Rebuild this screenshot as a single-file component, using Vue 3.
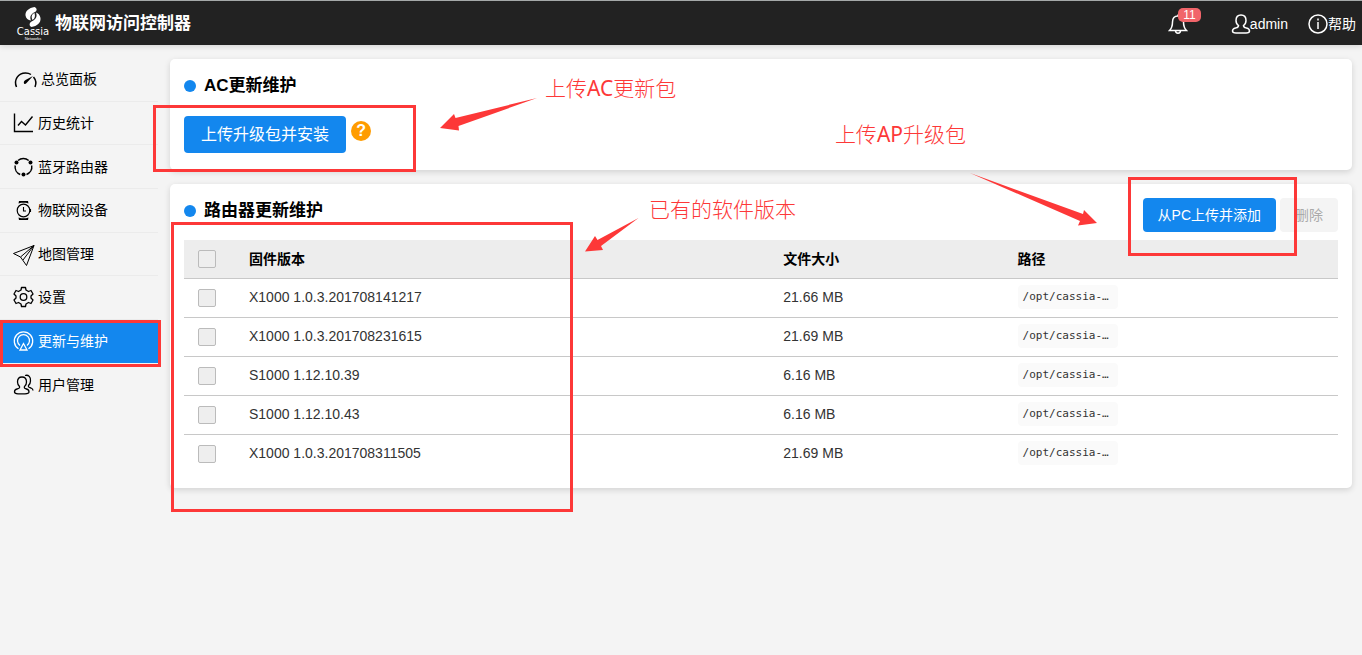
<script setup>
import { ref } from 'vue'

const nav = [
  { id: 'gauge', label: '总览面板' },
  { id: 'chart', label: '历史统计' },
  { id: 'ring', label: '蓝牙路由器' },
  { id: 'watch', label: '物联网设备' },
  { id: 'plane', label: '地图管理' },
  { id: 'gear', label: '设置' },
  { id: 'update', label: '更新与维护', active: true },
  { id: 'users', label: '用户管理' },
]

const rows = ref([
  { version: 'X1000 1.0.3.201708141217', size: '21.66 MB', checked: false },
  { version: 'X1000 1.0.3.201708231615', size: '21.69 MB', checked: false },
  { version: 'S1000 1.12.10.39', size: '6.16 MB', checked: false },
  { version: 'S1000 1.12.10.43', size: '6.16 MB', checked: false },
  { version: 'X1000 1.0.3.201708311505', size: '21.69 MB', checked: false },
])
</script>

<template>
  <div class="page">
    <header class="topbar">
      <a class="brand" href="#">
        <span class="logo">
          <svg class="swirl" viewBox="0 0 16 20" aria-hidden="true">
            <path d="M9.500 0C4 1 0 4 0.500 8.500C1 11.500 3 13 6 13.500C4.500 10 5.500 7 10 5C12.500 3.500 12 1 9.500 0Z" fill="#fff" />
            <path d="M6.500 20C12 19 16 16 15.500 11C15 8 13 6 11 5.500C12.500 9.500 11 12.500 6.500 14.500C4 16 4 19 6.500 20Z" fill="#fff" />
            <path d="M9.500 6C6.500 7.500 6 10 7.500 13C10 11.500 10.500 9 9.500 6Z" fill="#fff" />
          </svg>
          <span class="logo-name">Cassia</span>
          <span class="logo-sub">Networks</span>
        </span>
        <span class="app-name">物联网访问控制器</span>
      </a>
      <div class="tools">
        <button class="tool bell" type="button" aria-label="11">
          <svg width="20" height="20" viewBox="0 0 20 20" fill="none" stroke="#fff" stroke-width="1.500">
            <path d="M10 2C6.500 2 4.500 4.500 4.500 8C4.500 12.500 4 14 1.500 16.500H18.500C16 14 15.500 12.500 15.500 8C15.500 4.500 13.500 2 10 2ZM10 2V0.500M7.500 16.500C7.500 20 12.500 20 12.500 16.500" />
          </svg>
          <span class="badge">11</span>
        </button>
        <a class="tool user" href="#">
          <svg width="20" height="20" viewBox="0 0 20 20" fill="none" stroke="#fff" stroke-width="1.500">
            <path d="M10 1C6.500 1 5 3.500 5 6.500C5 9 6 10.500 7.500 11.500C7.500 13.500 6.500 13.500 4.500 14C2.500 14.500 1.500 15.500 1.500 17C1.500 18.500 3 19 5 19H15C17 19 18.500 18.500 18.500 17C18.500 15.500 17.500 14.500 15.500 14C13.500 13.500 12.500 13.500 12.500 11.500C14 10.500 15 9 15 6.500C15 3.500 13.500 1 10 1Z" />
          </svg>
          <span>admin</span>
        </a>
        <a class="tool" href="#">
          <svg width="20" height="20" viewBox="0 0 20 20" fill="none" stroke="#fff" stroke-width="1.500">
            <circle cx="10" cy="10" r="9" />
            <path d="M10 8V15M10 4.500V6.500" />
          </svg>
          <span>帮助</span>
        </a>
      </div>
    </header>

    <div class="body">
      <nav class="sidebar">
        <a v-for="n in nav" :key="n.id" href="#" class="nav-item" :class="{ active: n.active, wide: n.id === 'gauge' }">
          <svg v-if="n.id === 'gauge'" class="icon" viewBox="0 0 24 22">
            <path d="M3.500 19C0.500 12 5 5 12.500 5C14.500 5 16.500 5.500 18 6.500M20.500 9C23 12 23.500 15.500 22 19" stroke-width="1.500" />
            <path d="M11 15.500C10.500 14 11 13 12.500 12L20 8L14 14.500C13 16 12 16.500 11 15.500Z" fill="currentColor" stroke="none" />
          </svg>
          <svg v-else-if="n.id === 'chart'" class="icon" viewBox="0 0 22 22">
            <path d="M1.500 1.500V19.500H20M5 13.500L8.500 9.500L12.500 13L19.500 4.500" stroke-width="1.400" />
          </svg>
          <svg v-else-if="n.id === 'ring'" class="icon" viewBox="0 0 22 22">
            <path d="M5 4.500A8.200 8.200 0 0 1 15.700 4.500M18.700 9.500A8.200 8.200 0 0 1 13.500 18.500M7.200 18.500A8.200 8.200 0 0 1 2.200 9.500" stroke-width="1.500" />
            <g fill="currentColor" stroke="none">
              <circle cx="3.500" cy="6.500" r="2" /><circle cx="17.500" cy="6.500" r="2" /><circle cx="10.500" cy="18.500" r="2" />
            </g>
          </svg>
          <svg v-else-if="n.id === 'watch'" class="icon" viewBox="0 0 22 22">
            <circle cx="10.500" cy="11.500" r="6.300" stroke-width="1.200" />
            <path d="M10.500 8V12H13M17.500 10V13" stroke-width="1.100" />
            <path d="M5.500 4.500L6 2H15L15.500 4.500L13 3.800H8ZM5.500 18.500L6 21H15L15.500 18.500L13 19.200H8Z" fill="currentColor" stroke="none" />
          </svg>
          <svg v-else-if="n.id === 'plane'" class="icon" viewBox="0 0 22 22">
            <path d="M21 2.500L0.500 10.500L7.500 14L13.500 22.500ZM21 2.500L7.500 14M21 2.500L10 17" stroke-width="1" />
          </svg>
          <svg v-else-if="n.id === 'gear'" class="icon" viewBox="0 0 22 22">
            <path d="M8.500 1.500H12.500L13 4L15.500 5.500L18 4.500L20 8L18 10V12L20 14L18 17.500L15.500 16.500L13 18L12.500 20.500H8.500L8 18L5.500 16.500L3 17.500L1 14L3 12V10L1 8L3 4.500L5.500 5.500L8 4Z" stroke-width="1.300" stroke-linejoin="round" />
            <circle cx="10.500" cy="11" r="3.300" stroke-width="1.300" />
          </svg>
          <svg v-else-if="n.id === 'update'" class="icon" viewBox="0 0 22 22">
            <path d="M5.500 18.800A9.200 9.200 0 1 1 15.500 18.800M7 15.500A6 6 0 1 1 14 15.500M10.500 13.500L7 20H14Z" stroke-width="1.300" />
          </svg>
          <svg v-else class="icon" viewBox="0 0 22 22">
            <path d="M9 3C6 3 4.500 5 4.500 8C4.500 10 5.500 11.500 6.500 12.500C7 14 6 14.500 4 15C2 15.500 1.500 16.500 1.500 18C1.500 19.500 3 19.800 5 19.800H12C14.500 19.800 16 19.500 16 18C16 16.500 15.500 15.500 13.500 15C11.500 14.500 11 14 11.500 12.500C13 11.500 13.500 10 13.500 8C13.500 5 12 3 9 3ZM12 1.500C15.500 0.500 18 3 17.500 7C17.500 9 16.500 10.500 15.500 11.500C15 13 16 13.500 18 14C19.500 14.500 20 15 20 16.500" stroke-width="1.300" />
          </svg>
          <span>{{ n.label }}</span>
          <i v-if="n.active" class="mark mark-nav"></i>
        </a>
      </nav>

      <main class="content">
        <section class="card">
          <h2>AC更新维护</h2>
          <div class="upload">
            <button class="btn large" type="button">上传升级包并安装</button>
            <button class="help" type="button">?</button>
          </div>
        </section>

        <section class="card">
          <div class="card-head">
            <h2>路由器更新维护</h2>
            <div class="actions">
              <button class="btn" type="button">从PC上传并添加</button>
              <button class="btn disabled" type="button" disabled>删除</button>
            </div>
          </div>
          <table>
            <colgroup><col class="c1" /><col class="c2" /><col class="c3" /><col /></colgroup>
            <thead>
              <tr>
                <th><input type="checkbox" aria-label="固件版本" /></th>
                <th>固件版本</th>
                <th>文件大小</th>
                <th>路径</th>
              </tr>
            </thead>
            <tbody>
              <tr v-for="r in rows" :key="r.version">
                <td><input v-model="r.checked" type="checkbox" :aria-label="r.version" /></td>
                <td>{{ r.version }}</td>
                <td>{{ r.size }}</td>
                <td><code>/opt/cassia-…</code></td>
              </tr>
            </tbody>
          </table>
        </section>
      </main>
    </div>

    <i class="mark mark-upload"></i>
    <i class="mark mark-table"></i>
    <i class="mark mark-add"></i>
    <span class="note note-ac">上传<b>AC</b>更新包</span>
    <span class="note note-ap">上传<b>AP</b>升级包</span>
    <span class="note note-list">已有的软件版本</span>
    <svg class="arrow arrow-ac" width="97" height="34" viewBox="0 0 97 34"><path d="M0 30L14 16L15.500 20L97 0L18.500 28L19 32.500Z" /></svg>
    <svg class="arrow arrow-ap" width="127" height="54" viewBox="0 0 127 54"><path d="M0 0L113 41L114 37L127 50L108 52.500L110 48Z" /></svg>
    <svg class="arrow arrow-list" width="54" height="34" viewBox="0 0 54 34"><path d="M53.500 0L12.500 22L10 18L0 33.500L18 32L16 28Z" /></svg>
  </div>
</template>

<style>
body {
  background: #f4f4f4;
}
</style>

<style scoped>
.page {
  position: relative;
  min-height: 100vh;
  font-family: "Liberation Sans", "Noto Sans CJK SC", sans-serif;
  font-size: 14px;
  line-height: 20px;
  color: #000;
}
.page * {
  box-sizing: border-box;
}
a {
  color: inherit;
  text-decoration: none;
}
button {
  font: inherit;
  border: 0;
  cursor: pointer;
}
.topbar {
  display: flex;
  justify-content: space-between;
  height: 45px;
  padding: 1px 6px 0 16px;
  border-top: 1px solid #a5a9a9;
  background: #222;
  color: #fff;
  box-shadow: 0 1px 6px rgba(0, 0, 0, 0.15);
}
.brand {
  display: flex;
  align-items: center;
  gap: 5px;
}
.logo {
  display: flex;
  flex-direction: column;
  align-items: center;
  width: 34px;
}
.swirl {
  width: 16px;
  height: 20px;
}
.logo-name {
  font-family: "DejaVu Sans", sans-serif;
  font-size: 10px;
  line-height: 10px;
}
.logo-sub {
  font-size: 4px;
  line-height: 4px;
}
.app-name {
  font-size: 17px;
  font-weight: 700;
}
.tools {
  display: flex;
  align-items: center;
}
.tool {
  display: flex;
  align-items: center;
}
.user svg {
  margin-right: -1px;
}
.bell {
  position: relative;
  padding: 0;
  margin-right: 43px;
  background: none;
  color: #fff;
}
.badge {
  position: absolute;
  left: 10px;
  top: -6px;
  width: 23px;
  border-radius: 5px;
  background: #f1656a;
  font-size: 12px;
  line-height: 14px;
}
.user {
  margin-right: 20px;
}
.body {
  display: flex;
}
.sidebar {
  flex: none;
  display: grid;
  grid-template-rows: repeat(8, 1fr);
  width: 158px;
  height: 349px;
  margin-top: 13px;
}
.nav-item {
  position: relative;
  display: flex;
  align-items: center;
  gap: 3px;
  padding-left: 13px;
  border-bottom: 1px solid #ebebeb;
}
.nav-item:last-child {
  border-bottom: 0;
}
.nav-item.wide {
  gap: 4px;
}
.nav-item.active {
  border-color: #1387ee;
  background: #1387ee;
  color: #fff;
}
.icon {
  width: 22px;
  height: 22px;
  fill: none;
  stroke: currentColor;
  overflow: visible;
}
.wide .icon {
  width: 24px;
}
.content {
  flex: 1;
  display: flex;
  flex-direction: column;
  gap: 14px;
  min-width: 0;
  padding: 14px 10px 20px 12px;
}
.card {
  padding: 14px;
  border-radius: 5px;
  background: #fff;
  box-shadow: 0 2px 6px rgba(0, 0, 0, 0.14);
}
h2 {
  display: flex;
  align-items: center;
  gap: 8px;
  margin: 0;
  font-size: 17px;
  line-height: 26px;
}
h2::before {
  content: "";
  width: 12px;
  height: 12px;
  border-radius: 50%;
  background: #1387ee;
}
.upload {
  display: flex;
  gap: 5px;
  padding: 3px 0;
  margin-top: 14px;
}
.btn {
  padding: 0 15px;
  border-radius: 4px;
  background: #1387ee;
  color: #fff;
  line-height: 34px;
}
.btn.large {
  padding: 0 17px;
  font-size: 16px;
  line-height: 37px;
}
.btn.disabled {
  background: #f4f4f4;
  color: #aaa;
}
.help {
  width: 20px;
  height: 20px;
  padding: 0;
  margin-top: 5px;
  border-radius: 50%;
  background: #ff9c00;
  color: #fff;
  font-size: 16px;
  font-weight: 700;
}
.card-head {
  display: flex;
  justify-content: space-between;
  align-items: flex-start;
  margin-bottom: 8px;
}
.actions {
  display: flex;
  gap: 4px;
}
table {
  width: 100%;
  table-layout: fixed;
  border-collapse: separate;
  border-spacing: 0;
  text-align: left;
}
.c1 { width: 65px; }
.c2 { width: 46.3%; }
.c3 { width: 20.3%; }
th,
td {
  height: 39px;
  padding: 0;
  border-bottom: 1px solid #c8c8c8;
}
th {
  background: #ededed;
}
td {
  padding-bottom: 2px;
  color: #333;
}
td:first-child {
  padding-bottom: 0;
}
tbody tr:last-child td {
  border-bottom-color: transparent;
}
input {
  appearance: none;
  display: block;
  width: 18px;
  height: 18px;
  margin: 0 14px;
  border: 1px solid #bbb;
  border-radius: 2px;
  background: #eee;
}
code {
  display: block;
  width: 100px;
  padding: 0 5px;
  border-radius: 4px;
  background: #fafafa;
  font-family: "DejaVu Sans Mono", monospace;
  font-size: 11px;
  line-height: 24px;
}
.mark {
  position: absolute;
  border: 3px solid #fd3838;
  pointer-events: none;
}
.mark-nav {
  left: 0;
  top: 0;
  width: 161px;
  height: 47px;
  z-index: 1;
}
.mark-upload {
  left: 153px;
  top: 105px;
  width: 263px;
  height: 67px;
}
.mark-table {
  left: 171px;
  top: 222px;
  width: 402px;
  height: 290px;
}
.mark-add {
  right: 65px;
  top: 177px;
  width: 169px;
  height: 79px;
}
.note {
  position: absolute;
  color: #fd3838;
  font-family: "Noto Sans", "Noto Sans CJK SC", sans-serif;
  font-size: 21px;
  font-weight: 300;
  line-height: 28px;
  white-space: nowrap;
}
.note b {
  font-weight: 400;
}
.note-ac {
  left: 545px;
  top: 74px;
}
.note-ap {
  right: 396px;
  top: 120px;
}
.note-list {
  left: 649px;
  top: 195px;
}
.arrow {
  position: absolute;
  fill: #fd3838;
  pointer-events: none;
}
.arrow-ac {
  left: 440px;
  top: 98px;
}
.arrow-ap {
  right: 265px;
  top: 173px;
}
.arrow-list {
  left: 585px;
  top: 218px;
}
</style>
